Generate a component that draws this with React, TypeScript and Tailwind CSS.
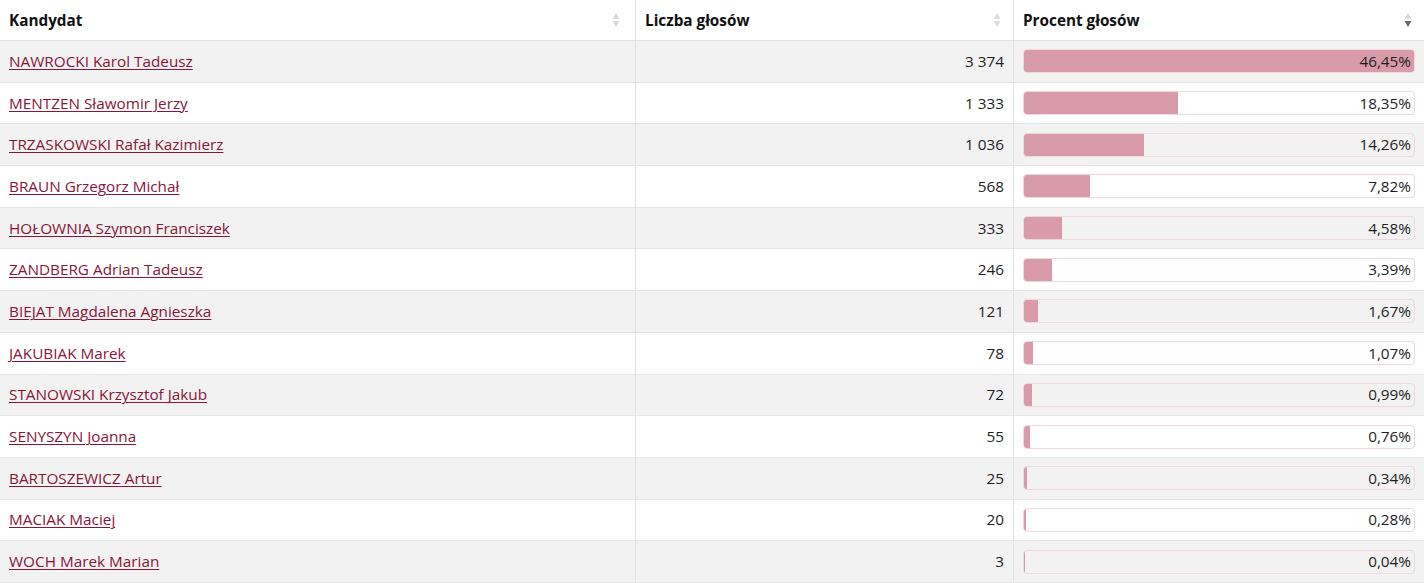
import React from "react";

const rows: [string, string, string, number][] = [
  ["NAWROCKI Karol Tadeusz", "3 374", "46,45%", 46.45],
  ["MENTZEN Sławomir Jerzy", "1 333", "18,35%", 18.35],
  ["TRZASKOWSKI Rafał Kazimierz", "1 036", "14,26%", 14.26],
  ["BRAUN Grzegorz Michał", "568", "7,82%", 7.82],
  ["HOŁOWNIA Szymon Franciszek", "333", "4,58%", 4.58],
  ["ZANDBERG Adrian Tadeusz", "246", "3,39%", 3.39],
  ["BIEJAT Magdalena Agnieszka", "121", "1,67%", 1.67],
  ["JAKUBIAK Marek", "78", "1,07%", 1.07],
  ["STANOWSKI Krzysztof Jakub", "72", "0,99%", 0.99],
  ["SENYSZYN Joanna", "55", "0,76%", 0.76],
  ["BARTOSZEWICZ Artur", "25", "0,34%", 0.34],
  ["MACIAK Maciej", "20", "0,28%", 0.28],
  ["WOCH Marek Marian", "3", "0,04%", 0.04],
];

function SortIcon({ active }: { active?: boolean }) {
  return (
    <svg width="8" height="16" viewBox="0 0 8 16" className="shrink-0">
      <path d="M4 1 L7.5 7 L0.5 7 Z" fill="#dcdcdc" />
      <path d="M4 15 L7.5 9 L0.5 9 Z" fill={active ? "#6b6b6b" : "#dcdcdc"} />
    </svg>
  );
}

export default function App() {
  const max = 46.45;
  return (
    <div
      className="w-[1424px] h-[583px] bg-white text-[15.3px] text-[#1e1e1e] overflow-hidden"
      style={{ fontFamily: '"Open Sans", "Noto Sans", sans-serif' }}
    >
      <div className="grid grid-cols-[636px_378px_1fr] h-[41px] border-b border-[#e2e2e2] font-bold text-[#111]">
        <div className="flex items-center justify-between pl-[9px] pr-[15px] border-r border-[#e2e2e2]">
          <span>Kandydat</span>
          <SortIcon />
        </div>
        <div className="flex items-center justify-between pl-[9px] pr-[12px] border-r border-[#e2e2e2]">
          <span>Liczba głosów</span>
          <SortIcon />
        </div>
        <div className="flex items-center justify-between pl-[9px] pr-[12px]">
          <span>Procent głosów</span>
          <SortIcon active />
        </div>
      </div>
      {rows.map(([name, votes, pct, val], i) => (
        <div
          key={name}
          className={`grid grid-cols-[636px_378px_1fr] h-[41.7px] border-b border-[#e6e6e6] ${
            i % 2 === 0 ? "bg-[#f2f2f2]" : "bg-white"
          }`}
        >
          <div className="flex items-center pl-[9px] border-r border-[#e2e2e2]">
            <a href="#" className="text-[#8a1538] underline underline-offset-2 decoration-1">
              {name}
            </a>
          </div>
          <div className="flex items-center justify-end pr-[9px] border-r border-[#e2e2e2]">
            {votes}
          </div>
          <div className="flex items-center pl-[9px] pr-[9px]">
            <div className="relative w-full h-[24px] rounded-[4px] border border-[#ecd8dd] overflow-hidden">
              <div
                className="absolute left-0 top-0 bottom-0 bg-[#d99ba9]"
                style={{ width: `${(val / max) * 100}%` }}
              />
              <div className="relative h-full flex items-center justify-end pr-[3px]">{pct}</div>
            </div>
          </div>
        </div>
      ))}
    </div>
  );
}
